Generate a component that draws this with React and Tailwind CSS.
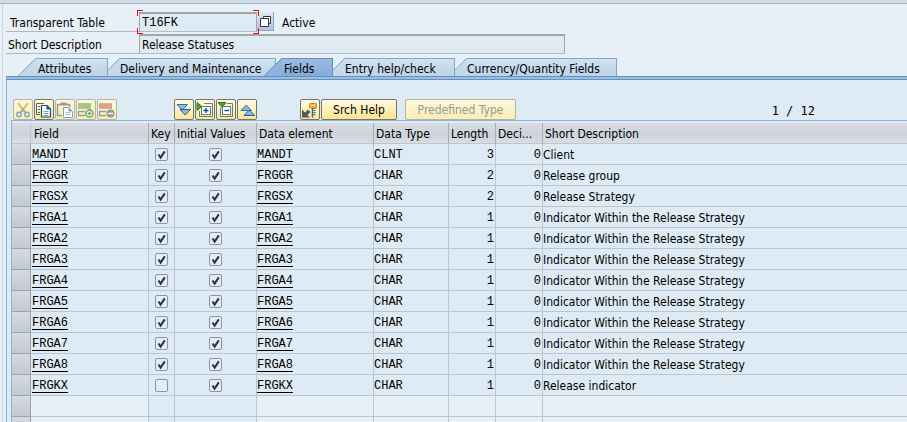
import React from "react";

const UI = "font-['DejaVu_Sans_Condensed','DejaVu_Sans',sans-serif]";
const MONO = "font-['Liberation_Mono',monospace]";

const FIELDS = [
  ["MANDT", true, "CLNT", 3, "Client"],
  ["FRGGR", true, "CHAR", 2, "Release group"],
  ["FRGSX", true, "CHAR", 2, "Release Strategy"],
  ["FRGA1", true, "CHAR", 1, "Indicator Within the Release Strategy"],
  ["FRGA2", true, "CHAR", 1, "Indicator Within the Release Strategy"],
  ["FRGA3", true, "CHAR", 1, "Indicator Within the Release Strategy"],
  ["FRGA4", true, "CHAR", 1, "Indicator Within the Release Strategy"],
  ["FRGA5", true, "CHAR", 1, "Indicator Within the Release Strategy"],
  ["FRGA6", true, "CHAR", 1, "Indicator Within the Release Strategy"],
  ["FRGA7", true, "CHAR", 1, "Indicator Within the Release Strategy"],
  ["FRGA8", true, "CHAR", 1, "Indicator Within the Release Strategy"],
  ["FRGKX", false, "CHAR", 1, "Release indicator"],
];

const COLUMNS = [
  ["Field", "pl-[3px]"],
  ["Key", "pl-[2px]"],
  ["Initial Values", "pl-[2px]"],
  ["Data element", "pl-[2px]"],
  ["Data Type", "pl-[2px]"],
  ["Length", "pl-[2px]"],
  ["Deci...", "pl-[2px]"],
  ["Short Description", "pl-[2px]"],
];

function Check({ label, checked }) {
  return (
    <label className="relative mx-auto block h-[13px] w-[13px]" aria-label={label}>
      <input
        type="checkbox"
        defaultChecked={checked}
        aria-label={label}
        className="peer block h-[13px] w-[13px] appearance-none rounded-[2px] border border-[#8c959e] bg-[#e3edf5]"
      />
      <svg viewBox="0 0 13 13" className="pointer-events-none absolute inset-0 hidden h-[13px] w-[13px] peer-checked:block" aria-hidden="true">
        <path d="M3.5 6.5L5.6 9.6L9.8 3.4" fill="none" stroke="#2c3050" strokeWidth="2" />
      </svg>
    </label>
  );
}

function Link({ children }) {
  return (
    <a href="#" className={`block h-[18px] w-fit border-b border-black leading-[22px] ${MONO}`}>
      {children}
    </a>
  );
}

function Tab({ label, active, lead, pad }) {
  const wide = lead === "wide";
  return (
    <button
      type="button"
      role="tab"
      aria-selected={!!active}
      className={`flex h-[18px] ${active ? "z-10 -ml-3" : ""}`}
    >
      <svg width={wide ? 18 : 12} height="18" viewBox={wide ? "0 0 18 18" : "0 0 12 18"} className="block shrink-0" aria-hidden="true">
        <path d={wide ? "M0 18L17.5 0.5H18V18Z" : "M0 12L11.5 0.5H12V18H0Z"} fill={active ? "#8fb3dd" : "#c5d9ec"} />
        <path d={wide ? "M0 18L17.5 0.5H18" : "M0 12L11.5 0.5H12"} fill="none" stroke={active ? "#5f8fc4" : "#86a5c8"} />
      </svg>
      <span
        className={`block h-[18px] border-t border-r bg-linear-to-b leading-[20px] ${pad} ${
          active ? "border-[#5f8fc4] from-[#9dbce2] to-[#86abd8]" : "border-[#86a5c8] from-[#d2e1f0] to-[#bcd3e9]"
        }`}
      >
        {label}
      </span>
    </button>
  );
}

function Tool({ label, disabled, children }) {
  return (
    <button
      type="button"
      aria-label={label}
      disabled={disabled}
      className={`flex h-[21px] w-[20px] items-center justify-center rounded-[2px] border bg-linear-to-b ${
        disabled ? "border-[#b5b3a2] from-[#fdf8dc] to-[#f8edb5]" : "border-[#77746a] from-[#fffbe2] to-[#fbe793]"
      }`}
    >
      <svg width="18" height="18" viewBox="0 0 18 18" fill="none" className="shrink-0" aria-hidden="true">
        {children}
      </svg>
    </button>
  );
}

function Toolbar() {
  return (
    <div className="flex h-[21px] pl-[6px]">
      <div className="flex gap-px">
        <Tool label="Cut" disabled>
          <path d="M4 2L11.5 12M14 2L6.5 12" stroke="#e6b45e" strokeWidth="2" />
          <path d="M9 8L7 11M9 8L11 11" stroke="#8aa9c7" strokeWidth="1.5" />
          <circle cx="5" cy="13.5" r="2.2" stroke="#7fa6cb" strokeWidth="1.5" />
          <circle cx="13" cy="13.5" r="2.2" stroke="#7fa6cb" strokeWidth="1.5" />
        </Tool>
        <Tool label="Copy">
          <path d="M5 13.5H1.5V2.5H9" stroke="#5c5c5c" />
          <path d="M3 5.5H5M3 8.5H5M3 11.5H5" stroke="#5c5c5c" />
          <path d="M6.5 4.5H12L15.5 8V16H6.5Z" fill="#fff" stroke="#0b5280" strokeWidth="1.2" />
          <path d="M11.5 4.5V8.5H15.5Z" fill="#0b5280" />
          <path d="M8.5 10.5H13.5M8.5 12.5H13.5M8.5 14.5H13.5" stroke="#6ba3cb" />
        </Tool>
        <Tool label="Paste" disabled>
          <path d="M6 14.5H1.5V3.5H13.5V6" stroke="#9a9a94" strokeWidth="1.5" />
          <rect x="4.5" y="1.5" width="6" height="3" fill="#9a9a94" />
          <path d="M7.5 6.5H12.5L16.5 10.5V16.5H7.5Z" fill="#fff" stroke="#80a5bd" />
          <path d="M12.5 6.5V10.5H16.5Z" fill="#80a5bd" />
          <path d="M9.5 11.5H14.5M9.5 13.5H14.5" stroke="#9dbfd2" />
        </Tool>
        <Tool label="Insert row" disabled>
          <rect x="1" y="3" width="13" height="4" fill="#a5c779" />
          <path d="M1 2.5H14M1 7.5H14" stroke="#b9baae" />
          <path d="M8 14.5H1.5V10.5H8" stroke="#9c9d91" strokeWidth="1.3" />
          <circle cx="12.5" cy="12.5" r="3.6" fill="#fff" stroke="#6fa05e" strokeWidth="1.5" />
          <path d="M10.5 12.5H14.5M12.5 10.5V14.5" stroke="#6fa05e" strokeWidth="1.3" />
        </Tool>
        <Tool label="Delete row" disabled>
          <rect x="1" y="3" width="13" height="4" fill="#e6a07b" />
          <path d="M1 2.5H14M1 7.5H14" stroke="#c4b9ae" />
          <path d="M8 14.5H1.5V10.5H8" stroke="#9c9d91" strokeWidth="1.3" />
          <circle cx="12.5" cy="12.5" r="4" fill="#96968f" />
          <path d="M10 12.5H15" stroke="#fff" strokeWidth="1.5" />
        </Tool>
      </div>
      <div className="ml-[57px] flex gap-px">
        <Tool label="Expand all">
          <path d="M2 3.5H12.5L7.25 9Z" fill="#8dbbe0" stroke="#2f74ab" />
          <path d="M5 8.500H15.500L10.250 14Z" fill="#8dbbe0" stroke="#1c5f93" />
        </Tool>
        <Tool label="Insert include">
          <path d="M8 2.500H16.500V15.500H3.500V10" stroke="#5d7f94" />
          <rect x="5.500" y="5.500" width="9" height="8" fill="#fff" stroke="#5d7f94" />
          <path d="M7.500 9.500H12.500M10 7V12" stroke="#0b4a7a" strokeWidth="1.400" />
          <path d="M1 1.500L6 5.500L1 9.500Z" fill="#5c9c20" stroke="#3c7a1a" />
        </Tool>
        <Tool label="Collapse include">
          <path d="M10 2.500H15.500V15.500H3.500V7" stroke="#5d7f94" />
          <rect x="5.500" y="5.500" width="8" height="8" fill="#fff" stroke="#5d7f94" />
          <path d="M7.500 9.500H12" stroke="#0b4a7a" strokeWidth="1.400" />
          <path d="M1 1.500H9L5 6.500Z" fill="#5c9c20" stroke="#3c7a1a" />
        </Tool>
        <Tool label="Collapse all">
          <path d="M3 9.500H13.500L8.250 4Z" fill="#8dbbe0" stroke="#2f74ab" />
          <path d="M6 14.500H16.500L11.250 9Z" fill="#8dbbe0" stroke="#1c5f93" />
        </Tool>
      </div>
      <div className="ml-[43px] flex gap-px">
        <Tool label="Foreign keys">
          <path d="M11.5 7V16.5" stroke="#2a6d9c" strokeWidth="1.5" />
          <path d="M13.5 7V15" stroke="#2a6d9c" strokeWidth="2" strokeDasharray="1 1" />
          <rect x="8.5" y="2.5" width="7" height="4.5" rx="1" fill="#f8b53a" stroke="#dc7a10" />
          <path d="M10.5 4.5H13.5" stroke="#fff" />
          <path d="M1 8.500V16.500H9L6.500 14L9.500 11L7 8.500L4 11.500Z" fill="#56585a" />
        </Tool>
        <button type="button" className="h-[21px] w-[76px] rounded-[2px] border border-[#77746a] bg-linear-to-b from-[#fffbe2] to-[#fbe58b] leading-[21px]">
          Srch Help
        </button>
      </div>
      <button type="button" disabled className="ml-[8px] h-[21px] w-[111px] rounded-[2px] border border-[#b5b3a2] bg-linear-to-b from-[#fdf8dc] to-[#faeeb4] leading-[21px] text-[#989890]">
        Predefined Type
      </button>
      <output className="ml-auto pr-[92px] leading-[24px] whitespace-pre font-['DejaVu_Sans_Mono',monospace]">1 / 12</output>
    </div>
  );
}

function FieldTable() {
  const line = "h-[21px] border-b border-r border-[#b9c6d5] p-0 align-top";
  const stub = "h-[21px] border-b border-r border-[#98a3ae] bg-linear-to-b from-[#d6dbe1] to-[#c3c9d1] p-0";
  return (
    <table className="w-full table-fixed border-separate border-spacing-0">
      <colgroup>
        <col className="w-[19px]" />
        <col className="w-[118px]" />
        <col className="w-[26px]" />
        <col className="w-[82px]" />
        <col className="w-[117px]" />
        <col className="w-[75px]" />
        <col className="w-[47px]" />
        <col className="w-[47px]" />
        <col />
      </colgroup>
      <thead>
        <tr className="bg-linear-to-b from-[#dadee2] via-[#ced3da] to-[#dadfe3]">
          <td className={line} />
          {COLUMNS.map(([name, pad], i) => (
            <th
              key={name}
              scope="col"
              className={`h-[21px] overflow-hidden border-b border-b-[#b9c6d5] p-0 text-left align-top leading-[22px] font-normal whitespace-nowrap ${pad} ${
                i < COLUMNS.length - 1 ? "border-r border-r-[#a3adb8]" : ""
              }`}
            >
              <span className="block h-[20px]">{name}</span>
            </th>
          ))}
        </tr>
      </thead>
      <tbody>
        {FIELDS.map(([name, key, type, length, text]) => (
          <tr key={name}>
            <td className={stub} />
            <td className={`${line} pl-px`}><Link>{name}</Link></td>
            <td className={`${line} pt-[4px]`}><Check label={`${name} key`} checked={key} /></td>
            <td className={`${line} pt-[4px]`}><Check label={`${name} initial values`} checked /></td>
            <td className={line}><Link>{name}</Link></td>
            <td className={`${line} leading-[22px] ${MONO}`}><span className="block h-[20px]">{type}</span></td>
            <td className={`${line} pr-px text-right leading-[22px] ${MONO}`}><span className="block h-[20px]">{length}</span></td>
            <td className={`${line} pr-px text-right leading-[22px] ${MONO}`}><span className="block h-[20px]">0</span></td>
            <td className="h-[21px] border-b border-[#b9c6d5] p-0 align-top leading-[22px] whitespace-nowrap"><span className="block h-[20px]">{text}</span></td>
          </tr>
        ))}
        {[0, 1].map((n) => (
          <tr key={n} className="bg-[#e8f0f7]">
            <td className={stub} />
            <td className={line} />
            <td className={`${line} bg-[#deebf5]`} />
            <td className={`${line} bg-[#deebf5]`} />
            <td className={line} />
            <td className={line} />
            <td className={line} />
            <td className={line} />
            <td className="border-b border-[#b9c6d5] p-0" />
          </tr>
        ))}
      </tbody>
    </table>
  );
}

const corner = "pointer-events-none absolute h-[6px] w-[6px] border-[#e01010]";

export default function App() {
  return (
    <main className={`flex h-screen flex-col overflow-hidden bg-[#e8f0f7] text-[12px] text-black ${UI}`}>
      <div className="h-[4px] shrink-0 border-b border-[#a5b5c3] bg-[#d0dce7]" />
      <div className="ml-[2px] flex grow flex-col border-l border-[#ccd7e6] pl-[3px]">
        <form className="flex flex-col gap-[2px] pt-[8px]">
          <div className="flex h-[20px]">
            <label htmlFor="table" className="w-[133px] border-b border-[#b4b8bc] pl-[4px] leading-[22px]">Transparent Table</label>
            <span className="relative block">
              <input
                id="table"
                readOnly
                value="T16FK"
                className={`block h-[20px] w-[118px] border border-t-2 border-[#a3a6a8] border-b-[#b8bcbf] bg-[#deebf5] px-[2px] outline-none ${MONO}`}
              />
              <i className={`${corner} -top-[2px] -left-[2px] border-t border-l`} />
              <i className={`${corner} -top-[2px] -right-[2px] border-t border-r`} />
              <i className={`${corner} -bottom-[2px] -left-[2px] border-b border-l`} />
              <i className={`${corner} -right-[2px] -bottom-[2px] border-r border-b`} />
            </span>
            <button type="button" aria-label="Choose table" className="flex h-[19px] w-[17px] items-center justify-center border-r border-b border-[#90a5c0] bg-linear-to-b from-[#e0e9f2] to-[#afc3df]">
              <svg width="13" height="13" viewBox="0 0 13 13" className="shrink-0" aria-hidden="true">
                <path d="M4.5 1.5H11.5V8.5H4.5Z" fill="#fff" stroke="#33363a" />
                <path d="M1.5 3.5H9.5V11.5H1.5Z" fill="#fff" stroke="#33363a" />
              </svg>
            </button>
            <span className="pl-[8px] leading-[22px]">Active</span>
          </div>
          <div className="flex h-[20px]">
            <label htmlFor="description" className="w-[133px] border-b border-[#b4b8bc] pl-[2px] leading-[22px]">Short Description</label>
            <input
              id="description"
              readOnly
              value="Release Statuses"
              className="block h-[20px] w-[426px] border border-t-2 border-[#a3a6a8] border-b-[#b8bcbf] bg-[#deebf5] px-[2px] outline-none"
            />
          </div>
        </form>

        <div role="tablist" className="mt-[4px] flex pl-[12px]">
          <Tab label="Attributes" lead="wide" pad="pl-[2px] w-[72px] text-left" />
          <Tab label="Delivery and Maintenance" pad="w-[156px] text-left" />
          <Tab label="Fields" active lead="wide" pad="pl-[2px] w-[51px] text-left" />
          <Tab label="Entry help/check" pad="w-[110px] text-left" />
          <Tab label="Currency/Quantity Fields" pad="w-[150px] text-left" />
        </div>
        <div className="h-[4px] shrink-0 border-y border-[#6690bd] bg-[#9dbde0]" />

        <section className="grow border-l border-[#8fb0d4] bg-[#deebf5] pt-[19px]">
          <Toolbar />
          <div className="ml-[4px] border-t border-l border-[#8fb0d4] pt-[2px]">
            <FieldTable />
          </div>
        </section>
      </div>
    </main>
  );
}
